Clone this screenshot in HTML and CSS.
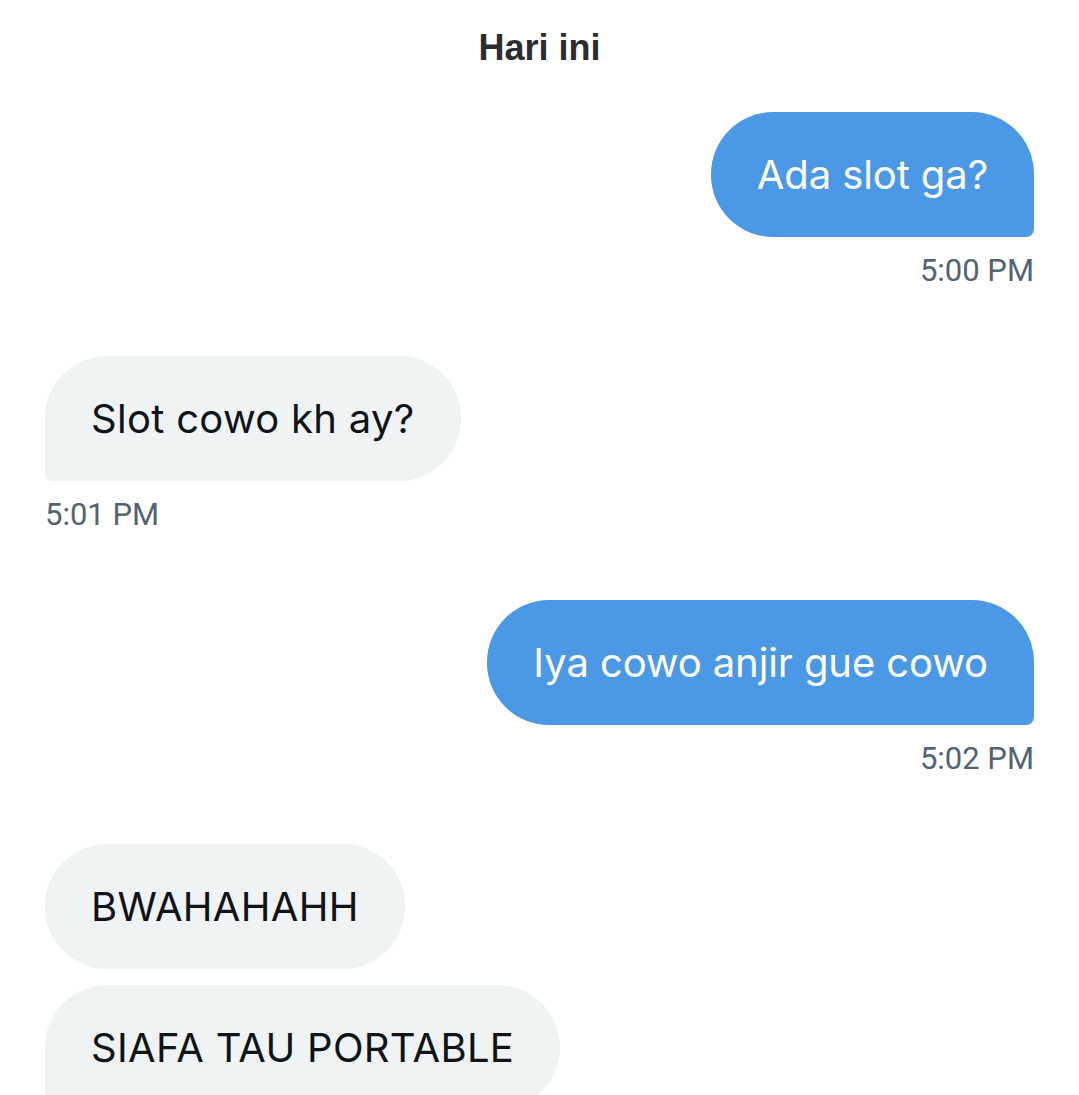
FILE: index.html
```html
<!DOCTYPE html>
<html lang="id">
<head>
<meta charset="utf-8">
<title>Pesan</title>
<link rel="stylesheet" href="styles.css">
</head>
<body>
<main class="chat">
  <div class="day">Hari ini</div>

  <div class="group sent">
    <div class="bubble sent-bubble last">Ada slot ga?</div>
    <div class="time">5:00 PM</div>
  </div>

  <div class="group recv">
    <div class="bubble recv-bubble last">Slot cowo kh ay?</div>
    <div class="time">5:01 PM</div>
  </div>

  <div class="group sent">
    <div class="bubble sent-bubble last">Iya cowo anjir gue cowo</div>
    <div class="time">5:02 PM</div>
  </div>

  <div class="group recv">
    <div class="bubble recv-bubble">BWAHAHAHH</div>
    <div class="bubble recv-bubble last">SIAFA TAU PORTABLE</div>
  </div>
</main>
</body>
</html>
```

FILE: styles.css
```css
html, body {
  margin: 0;
  padding: 0;
  background: #ffffff;
}

body {
  font-family: Inter, "Noto Sans", Roboto, sans-serif;
  overflow: hidden;
}

.chat {
  display: flex;
  flex-direction: column;
  padding: 0 45px;
}

.day {
  padding-top: 28px;
  font-family: "Liberation Sans", Arial, sans-serif;
  font-weight: 700;
  font-size: 36px;
  line-height: 40px;
  color: #2b2c30;
  text-align: center;
  margin-bottom: 44px;
}

.group {
  display: flex;
  flex-direction: column;
  gap: 16px;
  margin-bottom: 68px;
}

.group.sent {
  align-items: flex-end;
}

.group.recv {
  align-items: flex-start;
}

.bubble {
  padding: 36px 46px;
  font-size: 40px;
  line-height: 53px;
  border-radius: 62px;
  white-space: nowrap;
}

.sent-bubble {
  background: #4b99e6;
  color: #ffffff;
  letter-spacing: -0.1px;
}

.sent-bubble.last {
  border-bottom-right-radius: 8px;
}

.recv-bubble {
  background: #eff3f4;
  color: #0f1419;
  letter-spacing: 0.3px;
}

.recv-bubble.last {
  border-bottom-left-radius: 8px;
}

.time {
  margin-top: -16px;
  padding-top: 17px;
  font-family: Roboto, "Liberation Sans", sans-serif;
  font-size: 31px;
  line-height: 34px;
  color: #536471;
}
```
